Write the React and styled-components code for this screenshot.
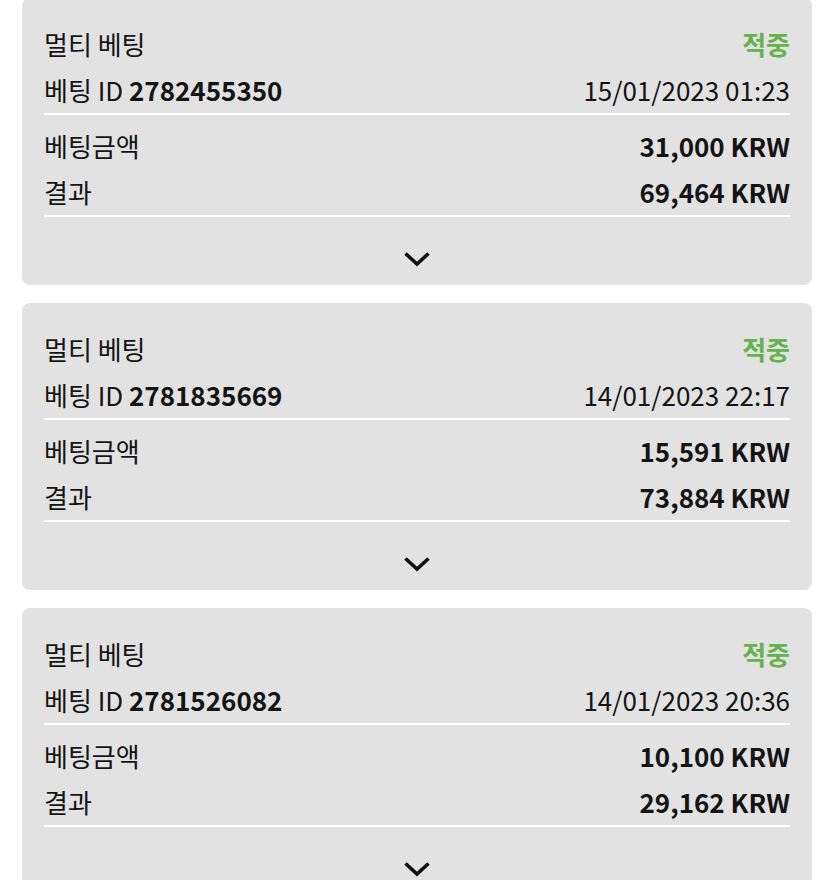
import React from 'react';
import styled, { createGlobalStyle } from 'styled-components';

const GlobalStyle = createGlobalStyle`
  html, body {
    margin: 0;
    padding: 0;
    background: #ffffff;
  }
  body {
    font-family: 'Noto Sans CJK KR', 'Noto Sans', sans-serif;
    color: #141414;
  }
`;

const bets = [
  { id: '2782455350', date: '15/01/2023 01:23', stake: '31,000 KRW', result: '69,464 KRW' },
  { id: '2781835669', date: '14/01/2023 22:17', stake: '15,591 KRW', result: '73,884 KRW' },
  { id: '2781526082', date: '14/01/2023 20:36', stake: '10,100 KRW', result: '29,162 KRW' },
];

// -------------------STYLES------------------- //

const List = styled.div`
  display: flex;
  flex-direction: column;
  gap: 18px;
  padding: 0 23px 0 22px;
  margin-top: -2px;
`;

const Card = styled.div`
  background: #e2e2e2;
  border-radius: 8px;
  padding: 23px 22px 18px;
  display: flex;
  flex-direction: column;
`;

const Row = styled.div`
  display: flex;
  justify-content: space-between;
  align-items: center;
  height: 46px;
  font-size: 26px;
  line-height: 1;
`;

const Label = styled.span`
  font-weight: 400;
`;

const Strong = styled.span`
  font-weight: 700;
`;

const Status = styled.span`
  color: #66b24e;
  font-weight: 700;
`;

const Divider = styled.div`
  height: 2px;
  background: #ffffff;
  margin: ${p => p.top || 0}px 0 ${p => p.bottom || 0}px;
`;

const Toggle = styled.div`
  display: flex;
  justify-content: center;
  padding-top: 34px;
  height: 16px;
`;

// ------------------COMPONENT------------------ //

const Chevron = () => (
  <svg width="28" height="16" viewBox="0 0 28 16">
    <path d="M2.5 2.5 L14 13 L25.5 2.5" fill="none" stroke="#111" strokeWidth="3.6" strokeLinecap="butt" strokeLinejoin="miter" />
  </svg>
);

const BetCard = ({ bet }) => (
  <Card>
    <Row>
      <Label>멀티 베팅</Label>
      <Status>적중</Status>
    </Row>
    <Row>
      <Label>베팅 ID <Strong>{bet.id}</Strong></Label>
      <Label>{bet.date}</Label>
    </Row>
    <Divider top={0} bottom={8} />
    <Row>
      <Label>베팅금액</Label>
      <Strong>{bet.stake}</Strong>
    </Row>
    <Row>
      <Label>결과</Label>
      <Strong>{bet.result}</Strong>
    </Row>
    <Divider top={0} />
    <Toggle>
      <Chevron />
    </Toggle>
  </Card>
);

const App = () => (
  <>
    <GlobalStyle />
    <List>
      {bets.map(b => <BetCard key={b.id} bet={b} />)}
    </List>
  </>
);

export default App;
